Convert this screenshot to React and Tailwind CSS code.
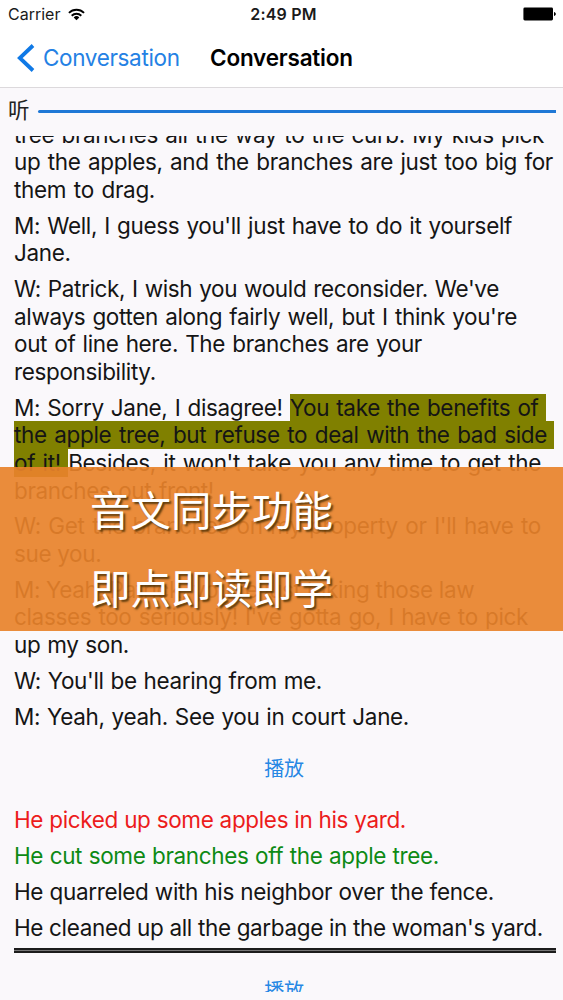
import React from "react";
import { clsx } from "clsx";

// every line keeps the measure it was typeset with
const paragraphs = [
  [
    { width: 530, parts: [{ text: "tree branches all the way to the curb. My kids pick" }] },
    { width: 539, parts: [{ text: "up the apples, and the branches are just too big for" }] },
    { width: 141, parts: [{ text: "them to drag." }] },
  ],
  [
    { width: 498, parts: [{ text: "M: Well, I guess you'll just have to do it yourself" }] },
    { width: 55, parts: [{ text: "Jane." }] },
  ],
  [
    { width: 485, parts: [{ text: "W: Patrick, I wish you would reconsider. We've" }] },
    { width: 503, parts: [{ text: "always gotten along fairly well, but I think you're" }] },
    { width: 408, parts: [{ text: "out of line here. The branches are your" }] },
    { width: 142, parts: [{ text: "responsibility." }] },
  ],
  [
    {
      width: 531.5,
      parts: [
        { text: "M: Sorry Jane, I disagree! " },
        { text: "You take the benefits of", active: true, padded: true },
      ],
    },
    { width: 540, parts: [{ text: "the apple tree, but refuse to deal with the bad side", active: true, padded: true }] },
    {
      width: 527,
      parts: [
        { text: "of it! ", active: true },
        { text: "Besides, it won't take you any time to get the" },
      ],
    },
    { width: 200, parts: [{ text: "branches out front!" }] },
  ],
  [
    { width: 527, parts: [{ text: "W: Get the branches on my property or I'll have to" }] },
    { width: 87, parts: [{ text: "sue you." }] },
  ],
  [
    { width: 460, parts: [{ text: "M: Yeah, Patrick, you're just taking those law" }] },
    { width: 514, parts: [{ text: "classes too seriously! I've gotta go, I have to pick" }] },
    { width: 115, parts: [{ text: "up my son." }] },
  ],
  [{ width: 308, parts: [{ text: "W: You'll be hearing from me." }] }],
  [{ width: 395, parts: [{ text: "M: Yeah, yeah. See you in court Jane." }] }],
];

const answers = [
  { width: 392, text: "He picked up some apples in his yard.", state: "wrong" },
  { width: 425, text: "He cut some branches off the apple tree.", state: "correct" },
  { width: 480, text: "He quarreled with his neighbor over the fence." },
  { width: 528.5, text: "He cleaned up all the garbage in the woman's yard." },
];

function StatusBar() {
  return (
    <div className="grid grid-cols-3 items-center h-[28px] pl-2 pr-[7px] text-[16px] text-[#1a1a1a]">
      <div className="flex items-center gap-2">
        <span>Carrier</span>
        <svg className="w-[17px] h-[13px]" viewBox="0 0 18 13" fill="none" stroke="#000" strokeWidth="2">
          <path d="M1 4.8a11.4 11.4 0 0 1 16 0" />
          <path d="M3.9 7.8a7.3 7.3 0 0 1 10.2 0" />
          <path d="M9 12.5 6 9.6a4.3 4.3 0 0 1 6 0Z" fill="#000" stroke="none" />
        </svg>
      </div>
      <span className="pl-[3px] text-center font-semibold tracking-[0.2px] whitespace-nowrap">2:49 PM</span>
      <div className="flex items-center justify-end">
        <svg className="w-[33px] h-[14px]" viewBox="0 0 33 14">
          <rect x="0.4" y="0.6" width="29.6" height="12.8" rx="1.4" fill="#000" />
          <path d="M31 5v4c1-.2 1.8-1 1.8-2S32 5.200 31 5Z" fill="#000" />
        </svg>
      </div>
    </div>
  );
}

function NavBar() {
  return (
    <div className="flex items-center h-[59px] pl-[17px]">
      <svg className="w-[18px] h-[28px] mr-2" viewBox="0 0 18 28" fill="none" stroke="#0f79e6" strokeWidth="3.8">
        <path d="M16 1.500 2.800 14 16 26.500" />
      </svg>
      <span className="w-[167px] text-[22.5px] tracking-[-0.35px] text-[#2481e4]">Conversation</span>
      <span className="text-[22.5px] tracking-[-0.2px] font-semibold text-black">Conversation</span>
    </div>
  );
}

function PlayButton() {
  return (
    <button className="block w-full pr-0.5 text-center text-[20px] leading-[28px] text-[#2687e4]">播放</button>
  );
}

function Line({ width, className, children }) {
  return (
    <span
      className={clsx("block whitespace-nowrap text-justify [text-align-last:justify]", className)}
      style={{ width }}
    >
      {children}
    </span>
  );
}

export default function App() {
  return (
    <div className="relative flex flex-col w-[563px] h-[1000px] overflow-hidden bg-[#faf8fb] font-['Inter','Noto_Sans_CJK_SC',sans-serif]">
      <header className="h-[88px] shrink-0 bg-white border-b border-[#dcd9dc]">
        <StatusBar />
        <NavBar />
      </header>

      <div className="flex items-center h-[48px] shrink-0 pl-2 pr-[7px] pb-0.5 gap-[9px]">
        <span className="w-[21px] text-[21.5px] leading-none text-[#222]">听</span>
        <div className="flex-1 h-[3px] bg-[#1f78d6] rounded-l-full" />
      </div>

      <main className="h-[856px] shrink-0 overflow-hidden pl-[14px] pr-[7px] text-[22.5px] leading-[27.6px] tracking-[-0.35px] text-[#151515]">
        <div className="-mt-[15.500px] flex flex-col gap-[8.300px]">
          {paragraphs.map((lines, i) => (
            <p key={i}>
              {lines.map((line, j) => (
                <Line key={j} width={line.width}>
                  {line.parts.map((part, k) => (
                    <span
                      key={k}
                      className={clsx(part.active && "bg-[#808000] pb-px", part.padded && "pr-[7px]")}
                    >
                      {part.text}
                    </span>
                  ))}
                </Line>
              ))}
            </p>
          ))}
        </div>

        <div className="mt-[24.300px]">
          <PlayButton />
        </div>

        <div className="mt-[23.500px] flex flex-col gap-[8.300px]">
          {answers.map((answer) => (
            <Line
              key={answer.text}
              width={answer.width}
              className={clsx(
                answer.state === "wrong" && "text-[#ec1c1c]",
                answer.state === "correct" && "text-[#0d8a14]"
              )}
            >
              {answer.text}
            </Line>
          ))}
        </div>

        <div className="mt-[6.500px] h-[5px] border-y-2 border-[#1c1c1c] bg-[#777]" />

        <div className="mt-[24px]">
          <PlayButton />
        </div>
      </main>

      {/* feature banner over the transcript */}
      <div className="absolute inset-x-0 top-[467px] h-[164px] flex flex-col pl-[90px] pt-[6px] bg-[#e8822a]/92 text-white text-[40.500px] leading-[78px] [text-shadow:2px_2px_2px_rgba(60,40,0,0.8)]">
        <span>音文同步功能</span>
        <span>即点即读即学</span>
      </div>
    </div>
  );
}
